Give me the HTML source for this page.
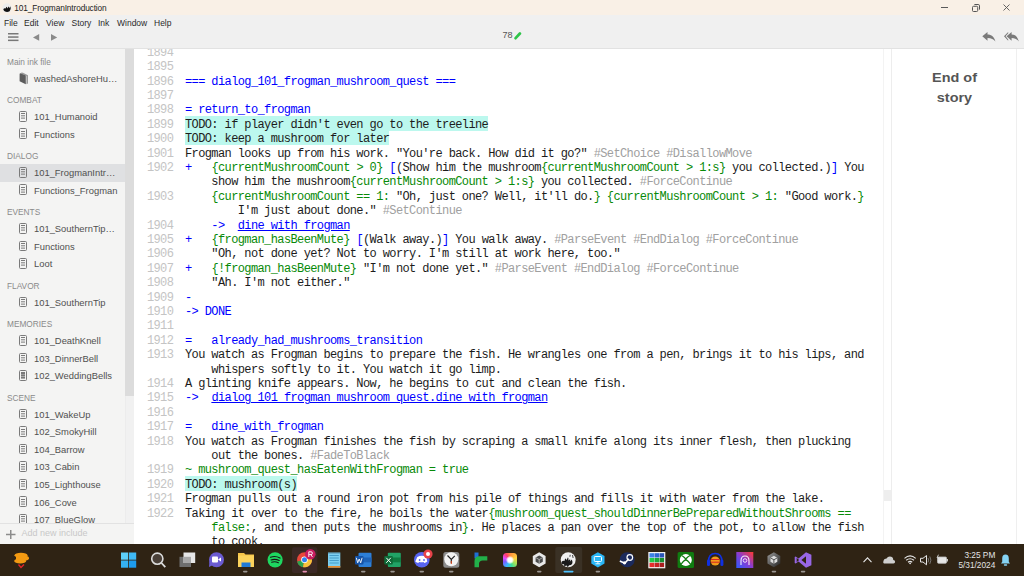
<!DOCTYPE html>
<html><head><meta charset="utf-8">
<style>
*{margin:0;padding:0;box-sizing:border-box}
html,body{width:1024px;height:576px;overflow:hidden;background:#fff;position:relative;font-family:"Liberation Sans",sans-serif}
.abs{position:absolute}
#title{left:0;top:0;width:1024px;height:15px;background:#f9f0e6}
#title .t{left:14.3px;top:2.5px;font-size:8.3px;letter-spacing:-0.12px;color:#222;white-space:nowrap}
#menu{left:0;top:15px;width:1024px;height:34px;background:#f0f0f0;border-bottom:1px solid #e2e2e2}
#menu .m{top:2.5px;font-size:8.5px;color:#2a2a2a;white-space:nowrap}
#side{left:0;top:49px;width:134px;height:495px;background:#f4f4f3}
.sh{position:absolute;left:7px;font-size:8.3px;color:#8a8a8a;white-space:nowrap}
.si{position:absolute;left:34px;font-size:9.4px;color:#505050;white-space:nowrap}
.ic{position:absolute;left:19px;width:8.4px;height:10.8px;border:1.2px solid #7a7a7a;border-radius:1.5px}
.ic:before{content:"";position:absolute;left:1.1px;top:1.4px;width:4px;height:1.1px;background:#7a7a7a;box-shadow:0 2.3px 0 #7a7a7a,0 4.6px 0 #7a7a7a}
#code{left:134px;top:49px;width:750px;height:495px;background:#fff;overflow:hidden}
.row{position:absolute;left:0;height:14.4px;white-space:pre;font-family:"Liberation Mono",monospace;font-size:12px;letter-spacing:-0.61px;line-height:14.4px;color:#1c1c1c}
.ln{position:absolute;left:12.9px;width:26.4px;text-align:right;color:#c4c4c4;top:1.7px}
.tx{position:absolute;left:51px;top:1.7px;z-index:2}
.b{color:#0000ff}.bd{font-weight:bold}.g{color:#088a08}.h{color:#a0a0a0}.u{text-decoration:underline}
.todo{background:#bcf8ee;z-index:1}
#right{left:890.5px;top:49px;width:133.5px;height:495px;background:#fff;border-left:1.5px solid #ededed}
#task{left:0;top:544px;width:1024px;height:32px;background:#2f2314}
</style></head><body>
<div id="title" class="abs">
  <svg class="abs" style="left:1.5px;top:2.5px" width="10" height="10" viewBox="0 0 10 10"><circle cx="5" cy="5" r="4.7" fill="#ececec"/><path d="M1.3 6.2Q2.5 4.6 3.6 5.6L4.4 3.8Q5.2 4.6 5.4 5.4L6.6 3.6Q7.4 4.4 7.6 5.2L8.6 3.2Q9.2 6.4 7.6 8.2Q5.5 9.6 3 8.6Q1.6 7.6 1.3 6.2Z" fill="#111"/></svg>
  <div class="abs t">101_FrogmanIntroduction</div>
  <div class="abs" style="left:941px;top:7px;width:7px;height:1px;background:#5a5a5a"></div>
  <svg class="abs" style="left:971.5px;top:3.5px" width="8" height="8" viewBox="0 0 8 8"><rect x="0.5" y="2.3" width="5.2" height="5.2" rx="1" fill="none" stroke="#555" stroke-width="1"/><path d="M2.2 0.8Q2.5 0.5 3 0.5H6.2Q7.5 0.5 7.5 1.8V5Q7.5 5.5 7.2 5.8" fill="none" stroke="#555" stroke-width="1"/></svg>
  <svg class="abs" style="left:1003px;top:4px" width="7" height="7" viewBox="0 0 7 7"><path d="M0.5 0.5L6.5 6.5M6.5 0.5L0.5 6.5" stroke="#555" stroke-width="0.9"/></svg>
</div>
<div id="menu" class="abs">
  <div class="abs m" style="left:4px">File</div>
  <div class="abs m" style="left:24px">Edit</div>
  <div class="abs m" style="left:46px">View</div>
  <div class="abs m" style="left:71.5px">Story</div>
  <div class="abs m" style="left:98px">Ink</div>
  <div class="abs m" style="left:117px">Window</div>
  <div class="abs m" style="left:154px">Help</div>

  <svg class="abs" style="left:8px;top:18.2px" width="11" height="9" viewBox="0 0 11 9"><rect x="0" y="0" width="10.5" height="1.5" fill="#787878"/><rect x="0" y="3.3" width="10.5" height="1.5" fill="#787878"/><rect x="0" y="6.6" width="10.5" height="1.5" fill="#787878"/></svg>
  <svg class="abs" style="left:32.5px;top:18.6px" width="7" height="7" viewBox="0 0 7 7"><path d="M0 3.4L6.2 0L6.2 6.8Z" fill="#8a8a8a"/></svg>
  <svg class="abs" style="left:51px;top:18.6px" width="7" height="7" viewBox="0 0 7 7"><path d="M6.2 3.4L0 0L0 6.8Z" fill="#8a8a8a"/></svg>
  <div class="abs" style="left:502.6px;top:14.6px;font-size:9.1px;letter-spacing:-0.2px;color:#555">78</div>
  <svg class="abs" style="left:514px;top:16.5px" width="8" height="8" viewBox="0 0 8 8"><path d="M1.6 6.2L5.9 1.5" stroke="#2ec44a" stroke-width="2.7" stroke-linecap="round"/></svg>
  <svg class="abs" style="left:981.5px;top:17px" width="14" height="10" viewBox="0 0 14 10"><path d="M0.3 4.2L5.5 0L5.5 2.6C9.5 2.6 12.3 4.8 13.4 9.6C11.7 7.4 9.4 6.1 5.5 6.1L5.5 8.8Z" fill="#7a7a7a"/></svg>
  <svg class="abs" style="left:1003.5px;top:17px" width="15" height="10" viewBox="0 0 15 10"><path d="M4.2 0L0 4.2L4.2 8.8L4.2 7.6L1.6 4.2L4.2 1.2Z" fill="#7a7a7a"/><path d="M2.6 4.2L7.6 0L7.6 2.6C11.2 2.6 13.8 4.8 14.8 9.6C13.2 7.4 11 6.1 7.6 6.1L7.6 8.8Z" fill="#7a7a7a"/></svg>
</div>
<div id="side" class="abs"><div class="abs" style="left:0;top:0;width:125px;height:474.5px;overflow:hidden"><div class="sh" style="top:7.6px">Main ink file</div>
<svg class="abs" style="left:18.5px;top:23.0px" width="10" height="13" viewBox="0 0 10 13"><path d="M1.5 1.2Q2.5 0.2 4 0.8L9 3.2V11.6L7.4 12.2V4L1.5 1.2Z" fill="#9a9a9a"/><path d="M0.6 2Q0.8 1 2 1.4L6.8 3.6V12.3L0.6 9.2Z" fill="#5c5c5c"/></svg>
<div class="si" style="top:23.5px">washedAshoreHu…</div>
<div class="sh" style="top:45.9px">COMBAT</div>
<div class="ic" style="top:61.8px"></div>
<div class="si" style="top:61.9px">101_Humanoid</div>
<div class="ic" style="top:79.3px"></div>
<div class="si" style="top:79.5px">Functions</div>
<div class="sh" style="top:101.9px">DIALOG</div>
<div class="abs" style="left:0;top:115.3px;width:125px;height:17.7px;background:#dfe0e2"></div>
<div class="ic" style="top:117.8px"></div>
<div class="si" style="top:118.0px">101_FrogmanIntr…</div>
<div class="ic" style="top:135.4px"></div>
<div class="si" style="top:135.5px">Functions_Frogman</div>
<div class="sh" style="top:158.0px">EVENTS</div>
<div class="ic" style="top:173.9px"></div>
<div class="si" style="top:174.0px">101_SouthernTip…</div>
<div class="ic" style="top:191.5px"></div>
<div class="si" style="top:191.6px">Functions</div>
<div class="ic" style="top:209.0px"></div>
<div class="si" style="top:209.1px">Loot</div>
<div class="sh" style="top:231.6px">FLAVOR</div>
<div class="ic" style="top:247.5px"></div>
<div class="si" style="top:247.6px">101_SouthernTip</div>
<div class="sh" style="top:270.1px">MEMORIES</div>
<div class="ic" style="top:286.0px"></div>
<div class="si" style="top:286.1px">101_DeathKnell</div>
<div class="ic" style="top:303.6px"></div>
<div class="si" style="top:303.7px">103_DinnerBell</div>
<div class="ic" style="top:321.1px"></div>
<div class="si" style="top:321.2px">102_WeddingBells</div>
<div class="sh" style="top:343.7px">SCENE</div>
<div class="ic" style="top:359.6px"></div>
<div class="si" style="top:359.7px">101_WakeUp</div>
<div class="ic" style="top:377.2px"></div>
<div class="si" style="top:377.3px">102_SmokyHill</div>
<div class="ic" style="top:394.7px"></div>
<div class="si" style="top:394.8px">104_Barrow</div>
<div class="ic" style="top:412.3px"></div>
<div class="si" style="top:412.4px">103_Cabin</div>
<div class="ic" style="top:429.8px"></div>
<div class="si" style="top:429.9px">105_Lighthouse</div>
<div class="ic" style="top:447.4px"></div>
<div class="si" style="top:447.5px">106_Cove</div>
<div class="ic" style="top:464.9px"></div>
<div class="si" style="top:465.0px">107_BlueGlow</div></div>
  <div class="abs" style="left:125px;top:0;width:8.5px;height:474.5px;background:#f1f1f1;border-left:1px solid #ececec"></div>
  <div class="abs" style="left:125px;top:0;width:8.5px;height:346.5px;background:#dcdcdc"></div>
  <div class="abs" style="left:0;top:474px;width:133.5px;height:1px;background:#e2e2e2"></div>
  <svg class="abs" style="left:6.3px;top:480.5px" width="9.5" height="9" viewBox="0 0 9.5 9"><path d="M4.75 0V9M0 4.5H9.5" stroke="#8c8c8c" stroke-width="1.5"/></svg>
  <div class="abs" style="left:21.5px;top:479.3px;font-size:9px;color:#c8c8c8;white-space:nowrap">Add new include</div>
</div>
<div id="code" class="abs"><div class="row" style="top:-4.90px"><span class="ln">1894</span><span class="tx" style="left:51.00px"></span></div>
<div class="row" style="top:9.50px"><span class="ln">1895</span><span class="tx" style="left:51.00px"></span></div>
<div class="row" style="top:23.90px"><span class="ln">1896</span><span class="tx" style="left:51.00px"><span class="b">=== dialog_101_frogman_mushroom_quest ===</span></span></div>
<div class="row" style="top:38.30px"><span class="ln">1897</span><span class="tx" style="left:51.00px"></span></div>
<div class="row" style="top:52.70px"><span class="ln">1898</span><span class="tx" style="left:51.00px"><span class="b">= return_to_frogman</span></span></div>
<div class="row" style="top:67.10px"><span class="ln">1899</span><div class="abs todo" style="left:51.00px;top:0;width:303.14px;height:14.65px"></div><span class="tx" style="left:51.00px">TODO: if player didn't even go to the treeline</span></div>
<div class="row" style="top:81.50px"><span class="ln">1900</span><div class="abs todo" style="left:51.00px;top:0;width:204.29px;height:14.65px"></div><span class="tx" style="left:51.00px">TODO: keep a mushroom for later</span></div>
<div class="row" style="top:95.90px"><span class="ln">1901</span><span class="tx" style="left:51.00px">Frogman looks up from his work. "You're back. How did it go?" <span class="h">#SetChoice #DisallowMove</span></span></div>
<div class="row" style="top:110.30px"><span class="ln">1902</span><span class="tx" style="left:51.00px"><span class="b">+   </span><span class="g">{currentMushroomCount &gt; 0}</span> <span class="b">[</span>(Show him the mushroom<span class="g">{currentMushroomCount &gt; 1:s}</span> you collected.)<span class="b">]</span> You</span></div>
<div class="row" style="top:124.70px"><span class="tx" style="left:77.36px">show him the mushroom<span class="g">{currentMushroomCount &gt; 1:s}</span> you collected. <span class="h">#ForceContinue</span></span></div>
<div class="row" style="top:139.10px"><span class="ln">1903</span><span class="tx" style="left:77.36px"><span class="g">{currentMushroomCount == 1:</span> "Oh, just one? Well, it'll do.<span class="g">}</span> <span class="g">{currentMushroomCount &gt; 1:</span> "Good work.<span class="g">}</span></span></div>
<div class="row" style="top:153.50px"><span class="tx" style="left:103.72px">I'm just about done." <span class="h">#SetContinue</span></span></div>
<div class="row" style="top:167.90px"><span class="ln">1904</span><span class="tx" style="left:77.36px"><span class="b">-&gt;  </span><span class="b u">dine_with_frogman</span></span></div>
<div class="row" style="top:182.30px"><span class="ln">1905</span><span class="tx" style="left:51.00px"><span class="b">+   </span><span class="g">{frogman_hasBeenMute}</span> <span class="b">[</span>(Walk away.)<span class="b">]</span> You walk away. <span class="h">#ParseEvent #EndDialog #ForceContinue</span></span></div>
<div class="row" style="top:196.70px"><span class="ln">1906</span><span class="tx" style="left:77.36px">"Oh, not done yet? Not to worry. I'm still at work here, too."</span></div>
<div class="row" style="top:211.10px"><span class="ln">1907</span><span class="tx" style="left:51.00px"><span class="b">+   </span><span class="g">{!frogman_hasBeenMute}</span> "I'm not done yet." <span class="h">#ParseEvent #EndDialog #ForceContinue</span></span></div>
<div class="row" style="top:225.50px"><span class="ln">1908</span><span class="tx" style="left:77.36px">"Ah. I'm not either."</span></div>
<div class="row" style="top:239.90px"><span class="ln">1909</span><span class="tx" style="left:51.00px"><span class="b">-</span></span></div>
<div class="row" style="top:254.30px"><span class="ln">1910</span><span class="tx" style="left:51.00px"><span class="b">-&gt; DONE</span></span></div>
<div class="row" style="top:268.70px"><span class="ln">1911</span><span class="tx" style="left:51.00px"></span></div>
<div class="row" style="top:283.10px"><span class="ln">1912</span><span class="tx" style="left:51.00px"><span class="b">=   already_had_mushrooms_transition</span></span></div>
<div class="row" style="top:297.50px"><span class="ln">1913</span><span class="tx" style="left:51.00px">You watch as Frogman begins to prepare the fish. He wrangles one from a pen, brings it to his lips, and</span></div>
<div class="row" style="top:311.90px"><span class="tx" style="left:77.36px">whispers softly to it. You watch it go limp.</span></div>
<div class="row" style="top:326.30px"><span class="ln">1914</span><span class="tx" style="left:51.00px">A glinting knife appears. Now, he begins to cut and clean the fish.</span></div>
<div class="row" style="top:340.70px"><span class="ln">1915</span><span class="tx" style="left:51.00px"><span class="b">-&gt;  </span><span class="b u">dialog_101_frogman_mushroom_quest.dine_with_frogman</span></span></div>
<div class="row" style="top:355.10px"><span class="ln">1916</span><span class="tx" style="left:51.00px"></span></div>
<div class="row" style="top:369.50px"><span class="ln">1917</span><span class="tx" style="left:51.00px"><span class="b">=   dine_with_frogman</span></span></div>
<div class="row" style="top:383.90px"><span class="ln">1918</span><span class="tx" style="left:51.00px">You watch as Frogman finishes the fish by scraping a small knife along its inner flesh, then plucking</span></div>
<div class="row" style="top:398.30px"><span class="tx" style="left:77.36px">out the bones. <span class="h">#FadeToBlack</span></span></div>
<div class="row" style="top:412.70px"><span class="ln">1919</span><span class="tx" style="left:51.00px"><span class="g">~ mushroom_quest_hasEatenWithFrogman = true</span></span></div>
<div class="row" style="top:427.10px"><span class="ln">1920</span><div class="abs todo" style="left:51.00px;top:0;width:112.03px;height:14.65px"></div><span class="tx" style="left:51.00px">TODO: mushroom(s)</span></div>
<div class="row" style="top:441.50px"><span class="ln">1921</span><span class="tx" style="left:51.00px">Frogman pulls out a round iron pot from his pile of things and fills it with water from the lake.</span></div>
<div class="row" style="top:455.90px"><span class="ln">1922</span><span class="tx" style="left:51.00px">Taking it over to the fire, he boils the water<span class="g">{mushroom_quest_shouldDinnerBePreparedWithoutShrooms ==</span></span></div>
<div class="row" style="top:470.30px"><span class="tx" style="left:77.36px"><span class="g">false:</span>, and then puts the mushrooms in<span class="g">}</span>. He places a pan over the top of the pot, to allow the fish</span></div>
<div class="row" style="top:484.70px"><span class="tx" style="left:77.36px">to cook.</span></div></div>
<div class="abs" style="left:883px;top:49px;width:1px;height:495px;background:#f3f3f3"></div>
<div class="abs" style="left:883.5px;top:490px;width:7.5px;height:11px;background:#eeeeee"></div>
<div id="right" class="abs">
  <div class="abs" style="left:0;top:19.3px;width:125px;text-align:center;font-weight:bold;font-size:12.9px;line-height:19.2px;color:#555;transform:scaleX(1.12);transform-origin:62.5px 0">End of<br>story</div>
</div>
<div class="abs" style="left:1016px;top:49px;width:1px;height:495px;background:#efefef"></div>
<div id="task" class="abs"><svg class="abs" style="left:0;top:0" width="1024" height="32" viewBox="0 544 1024 32">
<defs>
<linearGradient id="wg" x1="0" y1="0" x2="1" y2="1"><stop offset="0" stop-color="#6fd6fb"/><stop offset="1" stop-color="#1596ec"/></linearGradient>
<linearGradient id="ccg" x1="0" y1="0" x2="1" y2="1"><stop offset="0" stop-color="#ff3b7a"/><stop offset="0.35" stop-color="#b25cff"/><stop offset="0.65" stop-color="#ffb347"/><stop offset="1" stop-color="#3ddc84"/></linearGradient>
<linearGradient id="pg" x1="0" y1="1" x2="1" y2="0"><stop offset="0" stop-color="#2d5bff"/><stop offset="0.5" stop-color="#8a3bd0"/><stop offset="1" stop-color="#ff3b2f"/></linearGradient>
<linearGradient id="ug" x1="0" y1="0" x2="1" y2="1"><stop offset="0" stop-color="#9a9a9a"/><stop offset="1" stop-color="#222"/></linearGradient>
</defs>
<!-- orange bird app -->
<ellipse cx="21" cy="555.3" rx="6.5" ry="2.6" fill="#f39a12"/><ellipse cx="24" cy="558.2" rx="5" ry="2.4" fill="#f39a12"/><ellipse cx="20.2" cy="561" rx="6" ry="2.5" fill="#f39a12"/><rect x="16" y="556" width="9" height="5" fill="#f39a12"/>
<path d="M18.5 564.5l2.5 3 3-3" stroke="#e2262b" stroke-width="1.4" fill="none"/>
<!-- windows -->
<rect x="121" y="552.5" width="7.2" height="7.2" fill="#5dcff9"/><rect x="129" y="552.5" width="7.2" height="7.2" fill="#3fb9f6"/>
<rect x="121" y="560.5" width="7.2" height="7.2" fill="#35b2f4"/><rect x="129" y="560.5" width="7.2" height="7.2" fill="#1d9cef"/>
<!-- search -->
<circle cx="157.3" cy="558.7" r="5.6" fill="#4a4038" stroke="#dcdcdc" stroke-width="1.6"/>
<path d="M161.5 563l3.8 4.2" stroke="#dcdcdc" stroke-width="1.8"/>
<!-- task view -->
<rect x="179.5" y="556.8" width="11.5" height="10.2" fill="#6e6e6e"/>
<rect x="183.5" y="552.5" width="11.7" height="10.5" fill="#e6e6e6"/>
<rect x="183.5" y="556.8" width="7.5" height="6.2" fill="#a8a8a8"/>
<!-- teams/clipchamp -->
<circle cx="216.5" cy="559.8" r="7.5" fill="#6b5bd2"/>
<path d="M209.5 561l-0.5 6 4-2z" fill="#6b5bd2"/>
<rect x="212" y="556.5" width="6" height="6" rx="1" fill="#fff"/><path d="M218 559.5l3-2v4z" fill="#fff"/>
<!-- folder -->
<path d="M238 553h6l1.5 1.5H254V567H238z" fill="#f7c549"/>
<rect x="238" y="555.5" width="16" height="11.5" fill="#fcd35c"/>
<rect x="241.5" y="562.5" width="9" height="4.5" fill="#1f7ad6"/>
<rect x="243" y="570.8" width="4.5" height="1.6" rx="0.8" fill="#9a9590"/>
<!-- spotify -->
<circle cx="275.1" cy="559.8" r="7.6" fill="#1ed760"/>
<path d="M270.5 557.3q5-1.8 9.5 0.8M271 559.9q4.3-1.4 8.2 0.6M271.6 562.2q3.6-1 6.8 0.5" stroke="#191414" stroke-width="1.1" fill="none" stroke-linecap="round"/>
<!-- chrome highlighted -->
<rect x="292" y="547.2" width="25.3" height="25.8" rx="2" fill="#3b2925"/>
<circle cx="304.5" cy="559.8" r="7.5" fill="#e9473b"/>
<path d="M304.5 559.8L297.2 561.5A7.5 7.5 0 0 0 303 567.2z" fill="#2ea44f"/>
<path d="M304.5 559.8L303 567.2A7.5 7.5 0 0 0 311.8 558z" fill="#f6c33c"/>
<circle cx="304.5" cy="559.8" r="3.3" fill="#fff"/><circle cx="304.5" cy="559.8" r="2.5" fill="#2f7ff0"/>
<circle cx="310.3" cy="554.2" r="5.3" fill="#c91d61"/>
<path d="M308.8 557v-5.2h2.2q1.4 0 1.4 1.4t-1.4 1.4h-2.2M310.8 554.6l1.7 2.4" stroke="#fff" stroke-width="0.9" fill="none"/>
<rect x="302.5" y="570.8" width="4.5" height="1.6" rx="0.8" fill="#e58fb0"/>
<!-- notepad -->
<rect x="328" y="552.5" width="12.3" height="15" fill="#7ccff0"/>
<rect x="328" y="566" width="12.3" height="1.7" fill="#e58b2e"/>
<path d="M329.5 555.5h9.3M329.5 558h9.3M329.5 560.5h9.3M329.5 563h9.3" stroke="#2f86b8" stroke-width="0.7"/>
<path d="M329 552.5v1.5M331 552.5v1.5M333 552.5v1.5M335 552.5v1.5M337 552.5v1.5M339 552.5v1.5" stroke="#39607a" stroke-width="0.6"/>
<!-- word -->
<rect x="358.5" y="552.8" width="13" height="14.3" rx="1" fill="#2d7fd8"/>
<rect x="358.5" y="557.5" width="13" height="4.8" fill="#1e63b8"/>
<rect x="355" y="556" width="8.5" height="8.5" rx="1" fill="#1553a8"/>
<path d="M356.3 557.8l1.4 5 1.5-3.8 1.5 3.8 1.4-5" stroke="#fff" stroke-width="0.9" fill="none"/>
<rect x="361" y="570.8" width="4.5" height="1.6" rx="0.8" fill="#9a9590"/>
<!-- excel -->
<rect x="387.8" y="552.8" width="13" height="14.3" rx="1" fill="#21a366"/>
<rect x="387.8" y="557.5" width="13" height="4.8" fill="#107c41"/>
<rect x="384.3" y="556" width="8.5" height="8.5" rx="1" fill="#0e6b38"/>
<path d="M386.3 557.8l4.5 5M390.8 557.8l-4.5 5" stroke="#fff" stroke-width="1"/>
<rect x="390.3" y="570.8" width="4.5" height="1.6" rx="0.8" fill="#9a9590"/>
<!-- discord -->
<circle cx="421.8" cy="559.8" r="7.8" fill="#5865f2"/>
<path d="M417.3 557q4.5-2.4 9 0l1 4.5q-1.5 1.3-3 1.4l-0.8-1q-2.2 0.6-4.4 0l-0.8 1q-1.5-0.1-3-1.4z" fill="#fff"/>
<circle cx="419.6" cy="560" r="0.9" fill="#5865f2"/><circle cx="424" cy="560" r="0.9" fill="#5865f2"/>
<circle cx="428" cy="554" r="4.6" fill="#e8434a"/><circle cx="428" cy="554" r="2" fill="#fff"/>
<rect x="419.5" y="570.8" width="4.5" height="1.6" rx="0.8" fill="#9a9590"/>
<!-- clock -->
<rect x="443.3" y="552" width="16" height="15.7" rx="2.5" fill="#8c8c8c"/>
<circle cx="451.3" cy="559.3" r="7" fill="#f2f2f2"/>
<path d="M447.5 555.5l3.8 3.8 3.5-3.5M451.3 559.3v4" stroke="#222" stroke-width="1.2" fill="none"/>
<path d="M451.3 561v3" stroke="#e0461b" stroke-width="1"/>
<rect x="449" y="570.8" width="4.5" height="1.6" rx="0.8" fill="#9a9590"/>
<!-- green app -->
<rect x="474.5" y="552.5" width="4" height="6" fill="#1f6fd6"/><path d="M474.5 567.2v-6.2q0-4.8 4.8-4.8h8v4.2h-4.5q-3.8 0-3.8 3.6v3.2z" fill="#22b04a"/>
<!-- creative cloud -->

<!-- unity white hex -->
<path d="M539.2 552.3l6.4 3.7v7.5l-6.4 3.7-6.4-3.7v-7.5z" fill="#e8e8e8"/>
<path d="M539.2 555.5l3.6 2v4.2l-3.6 2-3.6-2v-4.2z" fill="#4a4a4a"/><path d="M539.2 559.6v4.1M539.2 559.6l3.6-2.1M539.2 559.6l-3.6-2.1" stroke="#cfcfcf" stroke-width="0.7"/>
<rect x="537" y="570.8" width="4.5" height="1.6" rx="0.8" fill="#9a9590"/>
<!-- inky selected -->
<rect x="555.3" y="547" width="26.9" height="26" rx="2" fill="#3a3125"/>
<circle cx="568.2" cy="559.8" r="7.5" fill="#f0f0f0"/>
<path d="M561.5 562q1.5-1.8 3-1l0.6-2.5q1.2 0.3 1.3 1.8l1.6-3q0.8 1.6 0.3 3.2l1.8-1.2q0.5 1.5-0.5 2.8l2.2-2.6q1.2 2.4 0.3 4.6q-1.4 1.4-3 1.2l-1.2 1.6q-1.2-0.6-1.6-1.6l-1.8 1.4q-0.6-1.4-0.4-2.4q-1.6 0.3-2.6-0.7z" fill="#1a1a1a"/><path d="M572.5 555l0.6 3M570.2 554.8l-0.3 2" stroke="#1a1a1a" stroke-width="0.8"/>
<rect x="563.5" y="570.8" width="10" height="1.6" rx="0.8" fill="#4cc2ff"/>
<!-- blue hex -->
<path d="M597.9 552.3l6.6 3.8v7.5l-6.6 3.8-6.6-3.8v-7.5z" fill="#29b6f6"/>
<rect x="594.3" y="556.5" width="7.2" height="5" rx="0.8" fill="none" stroke="#fff" stroke-width="1"/>
<path d="M597.9 561.5v2M595.5 563.8h4.8" stroke="#fff" stroke-width="0.9"/>
<rect x="595.6" y="570.8" width="4.5" height="1.6" rx="0.8" fill="#9a9590"/>
<!-- steam -->
<circle cx="627.2" cy="559.8" r="7.5" fill="#1b2a5c"/>
<circle cx="629.8" cy="557.5" r="2.8" fill="none" stroke="#fff" stroke-width="1.2"/>
<path d="M619.8 561l5 2.2 4-4.5" stroke="#fff" stroke-width="1.6" fill="none"/>
<circle cx="624.5" cy="562.8" r="1.6" fill="#fff"/>
<!-- grid -->
<rect x="648.3" y="552" width="17" height="16.3" fill="#f4f4f4"/>
<rect x="649.5" y="553.2" width="4.6" height="4.3" fill="#3b82e6"/><rect x="654.5" y="553.2" width="4.6" height="4.3" fill="#2d66d0"/><rect x="659.5" y="553.2" width="4.6" height="4.3" fill="#2a55b8"/>
<rect x="649.5" y="558" width="4.6" height="4.3" fill="#22c94a"/><rect x="654.5" y="558" width="4.6" height="4.3" fill="#1aa83a"/><rect x="659.5" y="558" width="4.6" height="4.3" fill="#178f31"/>
<rect x="649.5" y="562.8" width="4.6" height="4.3" fill="#e52d2d"/><rect x="654.5" y="562.8" width="4.6" height="4.3" fill="#c42424"/><rect x="659.5" y="562.8" width="4.6" height="4.3" fill="#a81e1e"/>
<!-- xbox -->
<rect x="677.6" y="552" width="16.4" height="16" rx="1.5" fill="#107c10"/>
<circle cx="685.8" cy="560" r="6" fill="#fff"/>
<path d="M681.5 555.5q4.3 2.5 4.3 4.5q0-2 4.3-4.5M681 564.5q3-4.5 4.8-4.5t4.8 4.5" stroke="#107c10" stroke-width="1.3" fill="none"/>
<!-- audacity -->
<path d="M708.5 561.5q0-8 6.7-8t6.7 8" stroke="#1030e0" stroke-width="1.6" fill="none"/>
<rect x="707" y="559.5" width="3" height="6.5" rx="1.3" fill="#1030e0"/><rect x="720.4" y="559.5" width="3" height="6.5" rx="1.3" fill="#1030e0"/>
<circle cx="715.2" cy="561" r="4.6" fill="#f29b1b"/>
<path d="M710.8 559.5h8.8M710.8 562.2h8.8" stroke="#d42424" stroke-width="1"/>
<!-- purple/red square -->
<rect x="736.3" y="552" width="17" height="16" fill="url(#pg)"/>
<path d="M741 565v-4q0-5 4-5t4 5v4" stroke="#fff" stroke-width="1.1" fill="none" opacity="0.9"/>
<circle cx="745" cy="560.5" r="1.8" fill="none" stroke="#fff" stroke-width="0.8"/>
<!-- unity dark -->
<path d="M773.9 552.3l6.4 3.7v7.5l-6.4 3.7-6.4-3.7v-7.5z" fill="url(#ug)"/>
<path d="M773.9 555.8l3.4 2v4l-3.4 2-3.4-2v-4z" fill="#dcdcdc"/><path d="M773.9 559.8v3.8M773.9 559.8l3.3-1.9M773.9 559.8l-3.3-1.9" stroke="#333" stroke-width="0.8"/>
<rect x="771.7" y="570.8" width="4.5" height="1.6" rx="0.8" fill="#9a9590"/>
<!-- visual studio -->
<path d="M806 552.3l5.4 2.4v10.6l-5.4 2.4-7.5-6.3-2.8 2.2-1-0.5v-6.2l1-0.5 2.8 2.2z" fill="#9867e6"/>
<path d="M806 556.3v7.4l-4.6-3.7z" fill="#2f2314"/>
<path d="M796.7 557.8v4.4l2.4-2.2z" fill="#2f2314"/>
<rect x="800.8" y="570.8" width="4.5" height="1.6" rx="0.8" fill="#9a9590"/>
<!-- tray -->
<path d="M863.5 562.2l4-4.3 4 4.3" stroke="#e6e6e6" stroke-width="1.1" fill="none"/>
<path d="M884 563.5h9.5q1.6 0 1.6-1.8t-1.8-1.8q-0.3-3.3-3.5-3.3-2.3 0-3.2 2-2.8-0.2-3.2 2.5-0.6 2.4 0.6 2.4z" fill="#cfcfcf"/>
<path d="M904.5 558.3q5.6-4.8 11.2 0M906.2 560.3q3.9-3.2 7.8 0M908 562.2q2.1-1.6 4.2 0" stroke="#e6e6e6" stroke-width="1.1" fill="none"/>
<circle cx="910.1" cy="563.3" r="0.9" fill="#e6e6e6"/>
<path d="M920.5 558.3h2.5l3.5-2.8v9.3l-3.5-2.8h-2.5z" fill="none" stroke="#e6e6e6" stroke-width="1"/>
<path d="M928 558q1.3 2.2 0 4.4M929.8 556.5q2.2 3.7 0 7.4" stroke="#8c8c8c" stroke-width="0.8" fill="none"/>
<rect x="937.5" y="557" width="9" height="6.3" rx="1" fill="#e6e6e6" stroke="#bdbdbd" stroke-width="0.8"/>
<rect x="946.5" y="559" width="1.4" height="2.5" fill="#d6d6d6"/>
<path d="M938.5 554.7l-1.5 3h2.5l-1.5 3" stroke="#d6d6d6" stroke-width="0.9" fill="none"/>
<text x="995.3" y="557.6" text-anchor="end" font-family="Liberation Sans" font-size="8.3" fill="#e4e4e4">3:25 PM</text>
<text x="995.3" y="568.1" text-anchor="end" font-family="Liberation Sans" font-size="8.3" fill="#e4e4e4">5/31/2024</text>
<path d="M1001 563.5h9l-1.2-1.8v-3.3q0-3.5-3.3-3.8-3.3 0.3-3.3 3.8v3.3z" fill="#86d3f4"/>
<rect x="1003.8" y="564.3" width="3.4" height="1.5" rx="0.7" fill="#86d3f4"/>
</svg><div class="abs" style="left:502.5px;top:8.8px;width:14.7px;height:14.3px;border-radius:3.5px;background:conic-gradient(from 0deg,#ff8a3d,#ffd23f 20%,#9be15d 35%,#3ddc97 45%,#38b6ff 58%,#7b5cff 70%,#e04cff 80%,#ff3b6b 90%,#ff8a3d)"><div class="abs" style="left:3.3px;top:3.2px;width:8px;height:8px;border-radius:50%;background:radial-gradient(circle,#fff 0 35%,rgba(255,255,255,0.6) 55%,rgba(255,255,255,0) 75%)"></div></div>
</div>
</body></html>
